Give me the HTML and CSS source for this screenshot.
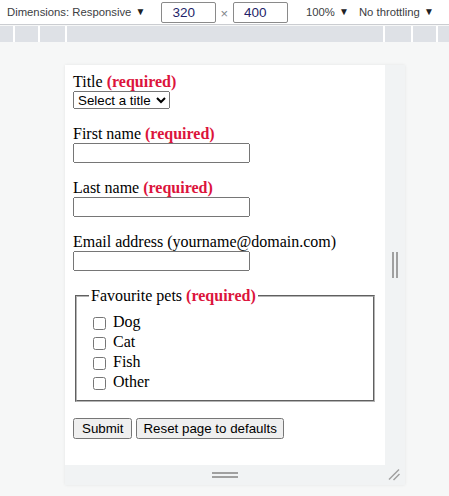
FILE: index.html
```html
<!DOCTYPE html>
<html lang="en">
<head>
<meta charset="utf-8">
<title>Responsive form</title>
<link rel="stylesheet" href="styles.css">
</head>
<body>
<div class="toolbar">
  <span class="tb-item tb-dim">Dimensions: Responsive <span class="caret">▼</span></span>
  <span class="tb-box tb-w">320</span>
  <span class="tb-x">×</span>
  <span class="tb-box">400</span>
  <span class="tb-item tb-zoom">100% <span class="caret">▼</span></span>
  <span class="tb-item tb-thr">No throttling <span class="caret">▼</span></span>
</div>
<div class="ruler">
  <span></span><span></span><span></span><span></span><span></span><span></span><span></span>
</div>
<div class="stage">
  <div class="device">
    <div class="viewport">
      <form class="form">
        <div class="field">
          <label for="title">Title <strong class="req">(required)</strong></label><br>
          <select id="title"><option>Select a title</option></select>
        </div>
        <div class="field">
          <label for="fname">First name <strong class="req">(required)</strong></label><br>
          <input type="text" id="fname">
        </div>
        <div class="field">
          <label for="lname">Last name <strong class="req">(required)</strong></label><br>
          <input type="text" id="lname">
        </div>
        <div class="field">
          <label for="email">Email address (yourname@domain.com)</label><br>
          <input type="text" id="email">
        </div>
        <fieldset class="pets">
          <legend>Favourite pets <strong class="req">(required)</strong></legend>
          <div class="pet"><input type="checkbox" id="dog"> <label for="dog">Dog</label></div>
          <div class="pet"><input type="checkbox" id="cat"> <label for="cat">Cat</label></div>
          <div class="pet"><input type="checkbox" id="fish"> <label for="fish">Fish</label></div>
          <div class="pet"><input type="checkbox" id="other"> <label for="other">Other</label></div>
        </fieldset>
        <div class="actions">
          <button type="button">Submit</button>
          <button type="button" class="btn-reset">Reset page to defaults</button>
        </div>
      </form>
    </div>
    <div class="handle-right"><span></span><span></span></div>
    <div class="handle-bottom"><span></span><span></span></div>
    <div class="handle-corner">
      <svg width="20" height="20" viewBox="0 0 20 20"><path d="M4 14.5 L14 4.5 M8.5 15 L14.5 9" stroke="#a0a0a0" stroke-width="1.5" fill="none"/></svg>
    </div>
  </div>
</div>
</body>
</html>
```
FILE: styles.css
```css
html, body {
  margin: 0;
  padding: 0;
}
body {
  width: 449px;
  height: 496px;
  overflow: hidden;
  background: #f6f7f7;
  font-family: "Liberation Sans", Arial, sans-serif;
}
.toolbar {
  height: 24px;
  background: #ffffff;
  border-bottom: 1px solid #cbcdd1;
  display: flex;
  align-items: center;
  font-size: 11.3px;
  color: #3c4043;
  white-space: nowrap;
}
.caret {
  font-size: 10px;
  color: #202124;
  position: relative;
  top: -1px;
  margin-left: 1px;
}
.tb-dim { margin-left: 7px; }
.tb-box {
  box-sizing: border-box;
  width: 55px;
  height: 21px;
  border: 1px solid #8a8a8a;
  border-radius: 2px;
  padding-left: 10px;
  line-height: 19px;
  font-size: 13.5px;
  color: #1f1f6a;
}
.tb-w { margin-left: 16px; }
.tb-x {
  color: #80868b;
  font-size: 13px;
  margin: 2px 5px 0 4px;
}
.tb-zoom { margin-left: 18px; }
.tb-thr { margin-left: 10px; }

.ruler {
  margin-top: 1px;
  height: 16px;
  display: grid;
  grid-template-columns: 13px 23px 25px 316px 26px 23px 11px;
  column-gap: 2px;
  background: #ffffff;
}
.ruler span { background: #dee1e6; }

.stage {
  padding: 23px 0 0 65px;
}
.device {
  width: 340px;
  height: 420px;
  display: grid;
  grid-template-columns: 320px 20px;
  grid-template-rows: 400px 20px;
  background: #f1f3f4;
  box-shadow: 0 0 3px rgba(0, 0, 0, 0.08);
}
.viewport {
  background: #ffffff;
  overflow: hidden;
  padding: 8px;
  font-family: "Liberation Serif", "Times New Roman", serif;
  font-size: 16px;
  color: #000;
}
.req { color: #dc143c; }
.field { margin-bottom: 16px; }
select, input[type="text"], button {
  font-family: "Liberation Sans", Arial, sans-serif;
  font-size: 13.3333px;
}
select {
  width: 97px;
  height: 18px;
  vertical-align: top;
}
input[type="text"] {
  box-sizing: border-box;
  width: 177px;
  height: 20px;
  vertical-align: top;
}
.pets {
  margin: 0 2px 16px;
  border: 2px groove #b4b4b4;
  padding: 8px 12px 7px;
}
.pet {
  height: 20px;
}
.pet input {
  margin: 4px 3px 3px 4px;
  width: 13px;
  height: 13px;
  vertical-align: top;
}
.actions {
  display: flex;
  gap: 4px;
}
button {
  padding: 1px 7px;
  height: 21px;
}
.btn-reset {
  padding: 1px 5px;
}

.handle-right {
  display: flex;
  justify-content: center;
  align-items: center;
  gap: 2px;
}
.handle-right span {
  width: 2px;
  height: 26px;
  background: #a0a0a0;
}
.handle-bottom {
  display: flex;
  flex-direction: column;
  justify-content: center;
  align-items: center;
  gap: 2px;
}
.handle-bottom span {
  width: 26px;
  height: 2px;
  background: #a0a0a0;
}
.handle-corner svg {
  display: block;
}
```
